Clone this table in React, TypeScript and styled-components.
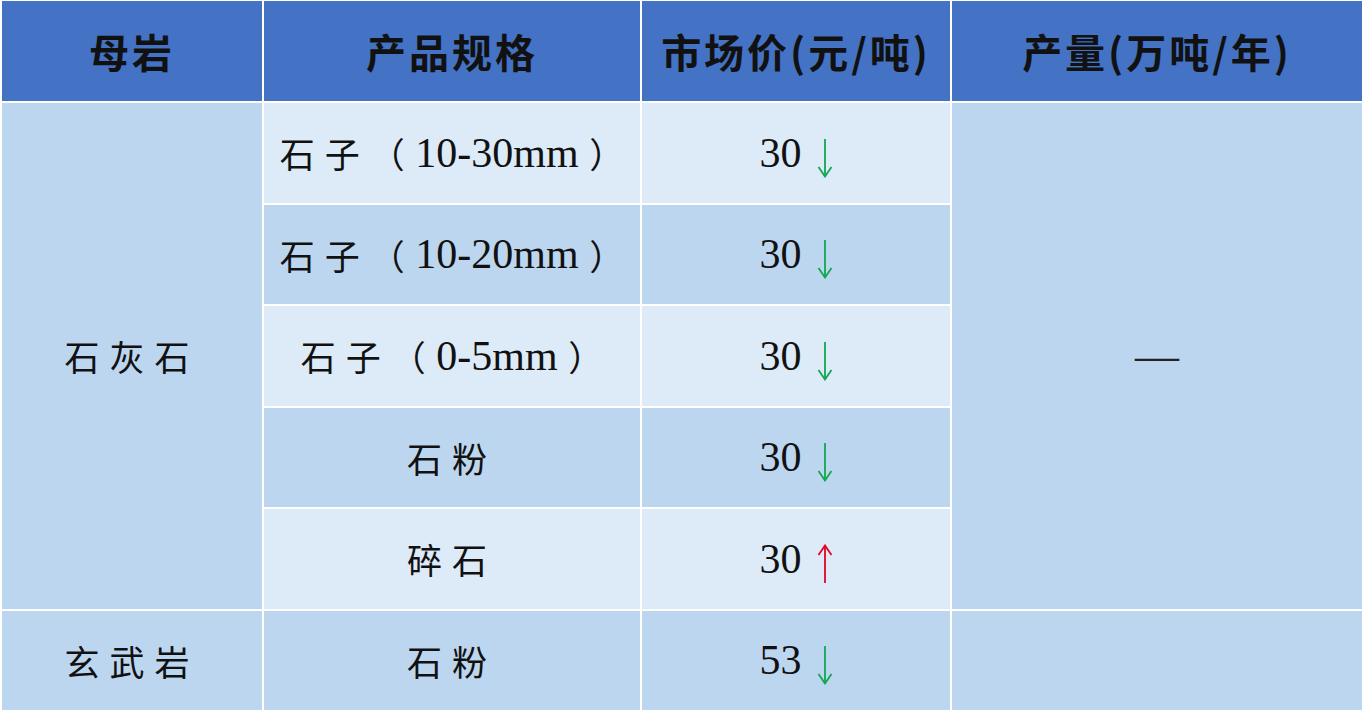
import React from 'react'
import styled, { createGlobalStyle } from 'styled-components'

const GlobalStyle = createGlobalStyle`
  html, body {
    margin: 0;
    padding: 0;
    background: #ffffff;
  }
`

const Table = styled.div`
  display: grid;
  grid-template-columns: 260px 376px 308px 410px;
  grid-template-rows: 100px repeat(6, 99.5px);
  gap: 2px;
  padding: 1px 2px 2px 2px;
  width: 1364px;
  height: 712px;
  box-sizing: border-box;
  background: #ffffff;
`

const HeadCell = styled.div`
  display: flex;
  align-items: center;
  justify-content: center;
  background: #4472c4;
  color: #111111;
  font-family: 'Noto Sans CJK SC', 'Noto Sans', sans-serif;
  font-weight: 700;
  font-size: 40px;
  letter-spacing: 3px;
`

const Cell = styled.div<{ $tone: 'dark' | 'light'; $row: string; $col?: string }>`
  display: flex;
  align-items: center;
  justify-content: center;
  grid-row: ${(p) => p.$row};
  grid-column: ${(p) => p.$col ?? 'auto'};
  background: ${(p) => (p.$tone === 'dark' ? '#bdd6ef' : '#ddeaf7')};
  color: #111111;
  font-family: 'Liberation Serif', 'Noto Sans CJK SC', serif;
  font-size: 42px;
`

const Cjk = styled.span<{ $spaced?: boolean }>`
  font-family: 'Noto Sans CJK SC', sans-serif;
  font-size: 35px;
  font-weight: 400;
  letter-spacing: ${(p) => (p.$spaced ? '10px' : '0')};
`

const Num = styled.span`
  font-family: 'Liberation Serif', serif;
  font-size: 42px;
  white-space: pre;
`

const Price = styled.div`
  display: flex;
  align-items: center;
  gap: 15px;
`

const Dash = styled.span`
  font-family: 'Liberation Serif', serif;
  font-size: 44px;
  color: #222222;
`

function Arrow({ up }: { up: boolean }) {
  const color = up ? '#e3051f' : '#12a650'
  return (
    <svg width="16" height="40" viewBox="0 0 16 40" style={{ marginTop: 10 }}>
      {up ? (
        <>
          <line x1="8" y1="2" x2="8" y2="39" stroke={color} strokeWidth="1.8" />
          <path d="M1.5 11 L8 1.5 L14.5 11" fill="none" stroke={color} strokeWidth="1.8" />
        </>
      ) : (
        <>
          <line x1="8" y1="1" x2="8" y2="38" stroke={color} strokeWidth="1.8" />
          <path d="M1.5 29 L8 38.5 L14.5 29" fill="none" stroke={color} strokeWidth="1.8" />
        </>
      )}
    </svg>
  )
}

const specs = [
  { kind: 'size', size: '10-30mm', price: '30', up: false },
  { kind: 'size', size: '10-20mm', price: '30', up: false },
  { kind: 'size', size: '0-5mm', price: '30', up: false },
  { kind: 'name', name: '石粉', price: '30', up: false },
  { kind: 'name', name: '碎石', price: '30', up: true },
]

export default function App() {
  return (
    <>
      <GlobalStyle />
      <Table>
        <HeadCell>母岩</HeadCell>
        <HeadCell>产品规格</HeadCell>
        <HeadCell>市场价(元/吨)</HeadCell>
        <HeadCell>产量(万吨/年)</HeadCell>

        <Cell $tone="dark" $row="2 / 7" $col="1">
          <Cjk $spaced>石灰石</Cjk>
        </Cell>

        {specs.map((s, i) => {
          const tone = i % 2 === 0 ? 'light' : 'dark'
          const row = `${i + 2}`
          return (
            <React.Fragment key={i}>
              <Cell $tone={tone} $row={row} $col="2">
                {s.kind === 'size' ? (
                  <>
                    <Cjk $spaced>石子</Cjk>
                    <Cjk>（</Cjk>
                    <Num> {s.size} </Num>
                    <Cjk>）</Cjk>
                  </>
                ) : (
                  <Cjk $spaced>{s.name}</Cjk>
                )}
              </Cell>
              <Cell $tone={tone} $row={row} $col="3">
                <Price>
                  <Num>{s.price}</Num>
                  <Arrow up={s.up} />
                </Price>
              </Cell>
            </React.Fragment>
          )
        })}

        <Cell $tone="dark" $row="2 / 7" $col="4">
          <Dash>—</Dash>
        </Cell>

        <Cell $tone="dark" $row="7" $col="1">
          <Cjk $spaced>玄武岩</Cjk>
        </Cell>
        <Cell $tone="dark" $row="7" $col="2">
          <Cjk $spaced>石粉</Cjk>
        </Cell>
        <Cell $tone="dark" $row="7" $col="3">
          <Price>
            <Num>53</Num>
            <Arrow up={false} />
          </Price>
        </Cell>
        <Cell $tone="dark" $row="7" $col="4" />
      </Table>
    </>
  )
}
